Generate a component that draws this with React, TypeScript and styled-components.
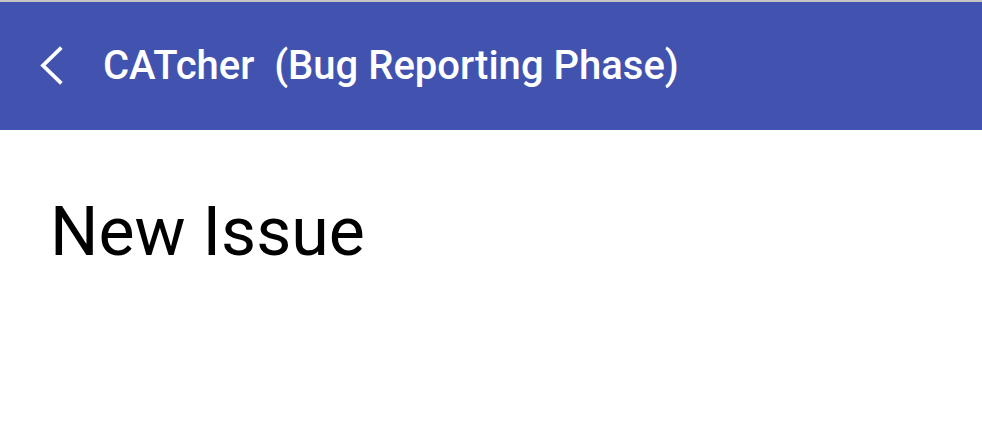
import React from "react";
import styled, { createGlobalStyle } from "styled-components";

const Global = createGlobalStyle`
  html, body { margin: 0; padding: 0; background: #ffffff; }
  body { font-family: Roboto, "Noto Sans", sans-serif; }
`;

const Page = styled.div`
  width: 982px;
  min-height: 434px;
  border-top: 2px solid #c4c4c4;
  box-sizing: border-box;
  background: #ffffff;
`;

const Toolbar = styled.header`
  height: 128px;
  background: #4253af;
  display: flex;
  align-items: center;
  padding-left: 38px;
  box-sizing: border-box;
  color: #ffffff;
`;

const BackButton = styled.button`
  border: 0;
  background: transparent;
  padding: 0;
  width: 26px;
  height: 40px;
  display: flex;
  align-items: center;
  justify-content: center;
  cursor: pointer;
  margin-right: 39px;
`;

const Title = styled.h1`
  margin: 0;
  font-family: Roboto, sans-serif;
  font-weight: 500;
  font-size: 40px;
  line-height: 1;
  white-space: pre;
`;

const Content = styled.main`
  padding: 62px 0 0 50px;
`;

const Heading = styled.h2`
  margin: 0;
  font-family: Roboto, sans-serif;
  font-weight: 400;
  font-size: 68px;
  line-height: 80px;
  color: #000000;
`;

export default function App() {
  return (
    <>
      <Global />
      <Page>
        <Toolbar>
          <BackButton aria-label="Back">
            <svg width="26" height="40" viewBox="0 0 26 40">
              <polyline
                points="22,3 5,19.5 22,36"
                fill="none"
                stroke="#ffffff"
                strokeWidth="3.8"
                strokeLinecap="square"
              />
            </svg>
          </BackButton>
          <Title>{"CATcher  (Bug Reporting Phase)"}</Title>
        </Toolbar>
        <Content>
          <Heading>New Issue</Heading>
        </Content>
      </Page>
    </>
  );
}
